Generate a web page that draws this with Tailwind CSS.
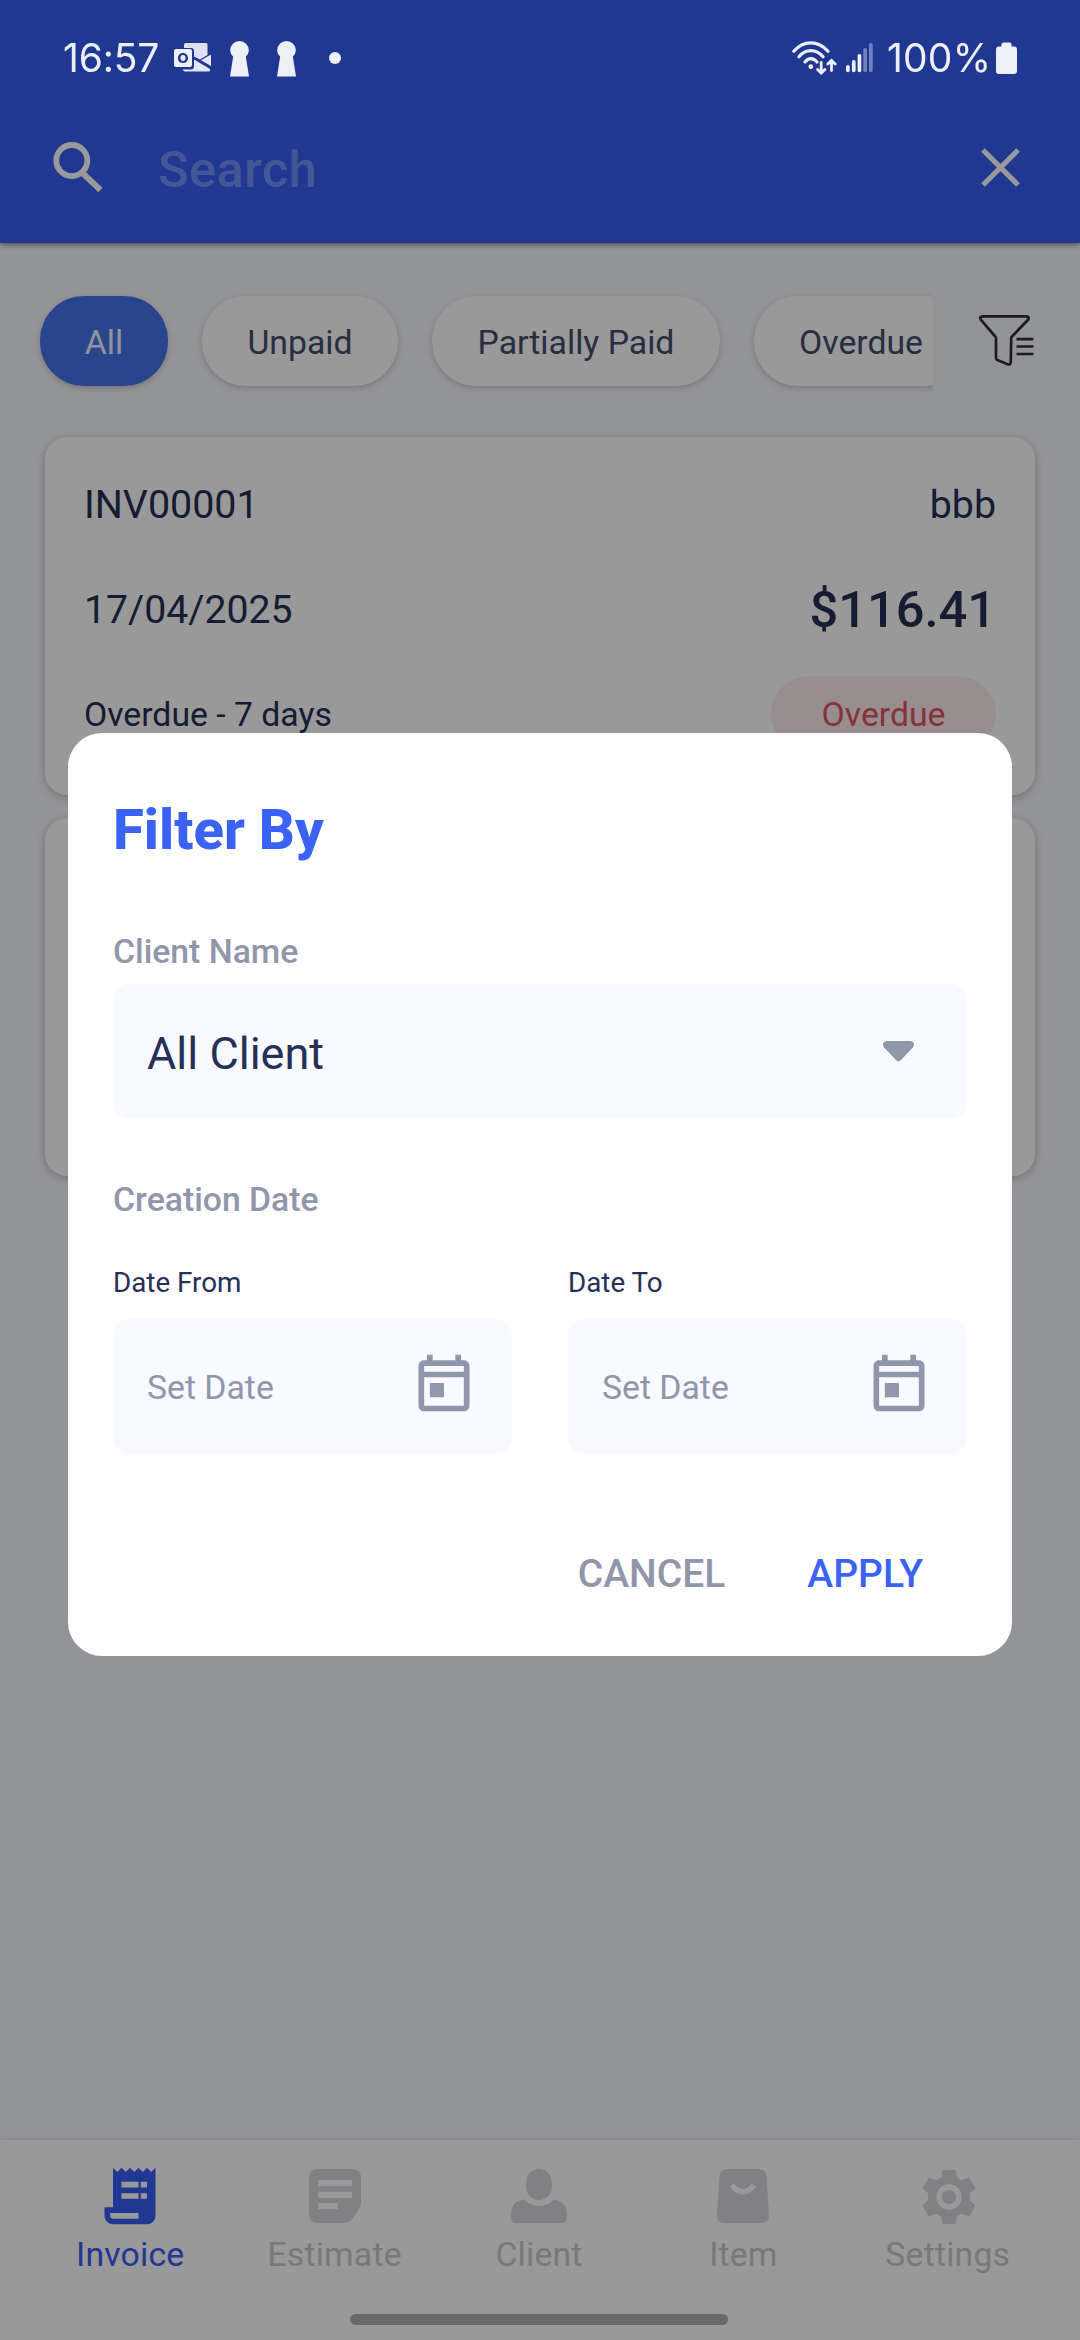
<!DOCTYPE html>
<html lang="en">
<head>
<meta charset="utf-8">
<title>Invoices</title>
<script src="https://cdn.jsdelivr.net/npm/@tailwindcss/browser@4"></script>
</head>
<body class="w-[1080px] h-[2340px] overflow-hidden bg-[#f6f7fd] font-['Roboto',sans-serif] text-[#243056]">
<div class="flex flex-col w-[1080px] h-[2340px]">

  <header class="relative h-[243px] shrink-0 bg-[#385ef6] shadow-[0_2px_5px_rgba(0,0,0,0.45)]">
    <!-- status bar -->
    <div class="relative z-20 flex items-start h-[100px] pt-[41px] pl-[63px] pr-[63px] text-[#eef0f8]">
      <span class="w-[111px] h-[34px] text-[39px] leading-[34px] font-['Inter',sans-serif] tracking-[-0.200px] whitespace-nowrap">16:57</span>
      <svg class="mt-[2px] shrink-0" width="38" height="30" viewBox="0 0 38 30" fill="currentColor">
        <path d="M12 0h20q1.500 0 1.500 1.500V12l-7.500 4.500-6-3V8q0-3-3-3H10V2q0-2 2-2z" opacity=".92"/>
        <path fill-rule="evenodd" d="M2 6h14q2 0 2 2v14q0 2-2 2H2q-2 0-2-2V8q0-2 2-2zM9 10c-3.200 0-5 2.200-5 5.200S5.800 20 9 20s5-2 5-4.800S12.200 10 9 10z"/>
        <ellipse cx="9" cy="15" rx="2.500" ry="3"/>
        <path d="M37 11.500v11.500l-10-5.700zM20 16.500l16 9.500v1.500q0 1-1.500 1H11q-2 0-2-2h8q3 0 3-3z" opacity=".95"/>
      </svg>
      <svg class="ml-[18px] shrink-0" width="19" height="36" viewBox="0 0 19 36" fill="currentColor"><path d="M9.500 0a9.300 9.300 0 0 1 9.300 9.300c0 2.600-1.200 4.700-3 6.200L19 35.500H0l3.200-20C1.400 14 .2 11.900.2 9.300A9.300 9.300 0 0 1 9.500 0z"/></svg>
      <svg class="ml-[28px] shrink-0" width="19" height="36" viewBox="0 0 19 36" fill="currentColor"><path d="M9.500 0a9.300 9.300 0 0 1 9.300 9.300c0 2.600-1.200 4.700-3 6.200L19 35.500H0l3.200-20C1.400 14 .2 11.900.2 9.300A9.300 9.300 0 0 1 9.500 0z"/></svg>
      <span class="ml-[33px] mt-[11px] size-[12px] rounded-full bg-[#eef0f8]"></span>
      <svg class="ml-auto shrink-0" width="46" height="34" viewBox="0 0 46 34" fill="none" stroke="currentColor" stroke-width="3.200" stroke-linecap="round">
        <path d="M1.800 10.200Q9 1.800 18.800 1.800T36 10.200M7 15.700Q12 9.700 18.800 9.700T31 15.700M13 21Q15.500 17.700 18.800 17.700T25 21"/>
        <circle cx="18.800" cy="25.700" r="2.400" fill="currentColor" stroke="none"/>
        <path stroke-width="2.800" d="M29.200 21.500v10M25.500 28.500l3.700 3.500 3.700-3.500M39.500 29.500v-9M35.800 23l3.700-3.500 3.700 3.500"/>
      </svg>
      <svg class="ml-[8px] mt-[2px] shrink-0" width="28" height="30" viewBox="0 0 28 30" fill="currentColor">
        <rect x="0" y="22" width="3.700" height="7.300" rx="1.800"/><rect x="5.900" y="17" width="3.700" height="12.300" rx="1.800"/><rect x="11.600" y="11" width="3.700" height="18.300" rx="1.800"/>
        <g opacity=".4"><rect x="17.300" y="5" width="3.700" height="24.300" rx="1.800"/><rect x="23" y="0" width="3.700" height="29.300" rx="1.800"/></g>
      </svg>
      <span class="ml-[13px] w-[103px] h-[34px] text-[39px] leading-[34px] font-['Inter',sans-serif] tracking-[0.200px] whitespace-nowrap">100%</span>
      <svg class="ml-[6px] mt-[1px] shrink-0" width="21" height="32" viewBox="0 0 21 32" fill="currentColor"><path d="M7.500 0.500h6q2 0 2 2v2h2.500q3 0 3 3V29q0 3-3 3H3q-3 0-3-3V7.500q0-3 3-3h2.500v-2q0-2 2-2z"/></svg>
    </div>
    <!-- search bar -->
    <div class="flex items-center h-[135px] pl-[53px] pr-[60px]">
      <svg width="51" height="51" viewBox="0 0 51 51" fill="none" stroke="#fff"><circle cx="18.800" cy="18.500" r="15.500" stroke-width="5.800"/><path d="M30.500 32l17 16" stroke-width="6"/></svg>
      <span class="ml-[54px] pt-[5px] text-[50.600px] leading-[60px] font-medium tracking-[0.400px] text-[#7490f9]">Search</span>
      <svg class="ml-auto" width="39" height="39" viewBox="0 0 39 39" fill="none" stroke="#fff" stroke-width="5.200"><path d="M2 2l35 35M37 2L2 37"/></svg>
    </div>
  </header>

  <main class="flex-1 flex flex-col">
    <!-- status filters -->
    <div class="flex items-center h-[174px] pt-[22px]">
      <div class="flex items-center gap-[34px] w-[933px] h-[130px] pl-[40px] overflow-hidden text-[33.750px] leading-[40px] text-[#434c6e] whitespace-nowrap">
        <span class="shrink-0 flex items-center justify-center w-[128px] h-[90px] pt-[3px] rounded-[44px] bg-[#4973ea] text-[#f3f5ff] shadow-[0_2px_6px_rgba(0,0,0,0.2)]">All</span>
        <span class="shrink-0 flex items-center justify-center w-[196px] h-[90px] pt-[3px] rounded-[44px] bg-white shadow-[0_2px_6px_rgba(0,0,0,0.2)]">Unpaid</span>
        <span class="shrink-0 flex items-center justify-center w-[288px] h-[90px] pt-[3px] rounded-[44px] bg-white shadow-[0_2px_6px_rgba(0,0,0,0.2)]">Partially Paid</span>
        <span class="shrink-0 flex items-center justify-center w-[214px] h-[90px] pt-[3px] rounded-[44px] bg-white shadow-[0_2px_6px_rgba(0,0,0,0.2)]">Overdue</span>
      </div>
      <svg class="ml-[46px]" width="56" height="52" viewBox="0 0 56 52" fill="none" stroke="#303030" stroke-width="2.700">
        <path d="M3.500 1.300H47Q51 1.500 49 4.800L33 21.500Q32.200 22.300 32.200 23.500L31.800 46.500Q31.500 50.300 28.500 49.300L18.500 45Q17 44.200 17 42.500V23.500Q17 22.300 16.200 21.500L1.900 4.800Q0 1.700 3.500 1.300z"/>
        <path d="M37.500 24.200h17M37.500 31.500h17M37.500 39h17"/>
      </svg>
    </div>

    <!-- invoice list -->
    <section class="flex flex-col gap-[23px] px-[45px] pt-[20px]">
      <article class="h-[358px] rounded-[22px] bg-white px-[39px] pt-[45px] shadow-[0_2px_8px_rgba(0,0,0,0.25)]">
        <div class="flex justify-between h-[46px] text-[39.400px] leading-[46px]"><span>INV00001</span><span>bbb</span></div>
        <div class="flex justify-between items-center mt-[52px] h-[60px]">
          <span class="text-[39.200px] leading-[46px]">17/04/2025</span>
          <span class="text-[50.600px] leading-[60px] font-medium">$116.41</span>
        </div>
        <div class="flex justify-between items-center mt-[36px] h-[76px] text-[33.750px] leading-[40px]">
          <span class="pt-[2px]">Overdue - 7 days</span>
          <span class="flex items-center justify-center w-[225px] h-[76px] pt-[2px] rounded-[38px] bg-[#feeced] text-[#e0555f]">Overdue</span>
        </div>
      </article>
      <article class="h-[358px] rounded-[22px] bg-white shadow-[0_2px_8px_rgba(0,0,0,0.25)]"></article>
    </section>
  </main>

  <nav class="flex flex-col h-[200px] shrink-0 bg-white pl-[28px] pr-[30px] pt-[22px] shadow-[0_-2px_6px_rgba(0,0,0,0.08)]">
    <div class="grid grid-cols-5 text-[33.750px] leading-[40px] tracking-[0.200px] text-[#c9c9c9] text-center">
      <a class="flex flex-col items-center text-[#385ef6]">
        <svg width="68" height="68" viewBox="0 0 24 24" fill="currentColor"><path fill-rule="evenodd" d="M19.500 3.500L18 2l-1.500 1.500L15 2l-1.500 1.500L12 2l-1.500 1.500L9 2 7.500 3.500 6 2v14H3v3c0 1.660 1.340 3 3 3h12c1.660 0 3-1.340 3-3V2l-1.500 1.500zM15 20H6c-.55 0-1-.45-1-1v-1h10v2zM9 7h6v2H9zM15.800 7h2.200v2h-2.200zM9 11h6v2H9zM15.800 11h2.200v2h-2.200z"/></svg>
        <span class="mt-[5px]">Invoice</span>
      </a>
      <a class="flex flex-col items-center">
        <svg width="68" height="68" viewBox="0 0 68 68" fill="#d5d6de"><path fill-rule="evenodd" d="M17 7H51q9 0 9 9V41q0 4.500-3 8l-6 8q-3.500 4-8 4H17q-9 0-9-9V16q0-9 9-9zM17 18v6.300H51V18zM17 29.700v6.300H51v-6.300zM17 41v6.300H37V41z"/></svg>
        <span class="mt-[5px]">Estimate</span>
      </a>
      <a class="flex flex-col items-center">
        <svg width="68" height="68" viewBox="0 0 68 68" fill="#d5d6de"><rect x="21.200" y="7" width="25.600" height="31" rx="12.800"/><path d="M19.500 37.700Q25.500 44 34 44T48.500 37.700Q61 39 61.800 51V56q0 5-5 5H11.200q-5 0-5-5V51Q7 38 19.500 37.700z"/></svg>
        <span class="mt-[5px]">Client</span>
      </a>
      <a class="flex flex-col items-center">
        <svg width="68" height="68" viewBox="0 0 68 68"><path fill="#d5d6de" d="M18.500 7h31q7.500 0 8 7.500L60 52q.5 9-8 9H16q-8.500 0-8-9L10.500 14.500Q11 7 18.500 7z"/><path d="M23 23Q28 29.700 34 29.700T45 23" fill="none" stroke="#fff" stroke-width="5.500"/></svg>
        <span class="mt-[5px]">Item</span>
      </a>
      <a class="flex flex-col items-center">
        <svg width="68" height="68" viewBox="-35 -35 68 68"><path fill="#d5d6de" stroke="#d5d6de" stroke-width="1.500" stroke-linejoin="round" d="M-6-26.300H6L7.200-18.800Q10-17.500 12-15.700L20-18.500 25.500-8.800 20-3.700Q20.500 0 20 3.700L25.500 8.800 20 18.500 12 15.700Q10 17.500 7.200 18.800L6 26.300H-6L-7.200 18.800Q-10 17.500-12 15.700L-20 18.500-25.500 8.800-20 3.700Q-20.500 0-20-3.700L-25.500-8.800-20-18.500-12-15.700Q-10-17.500-7.200-18.800z"/><circle r="9.900" fill="none" stroke="#fff" stroke-width="5.600"/></svg>
        <span class="mt-[5px]">Settings</span>
      </a>
    </div>
    <div class="mx-auto mt-[39px] w-[378px] h-[11px] rounded-full bg-[#afafaf]"></div>
  </nav>
</div>

<!-- filter dialog over a dimmed page -->
<div class="fixed inset-0 z-10 flex items-start justify-center bg-black/40 pt-[733px]">
  <div class="w-[944px] h-[923px] rounded-[34px] bg-white px-[45px] pt-[64px]">
    <h2 class="h-[66px] text-[56.250px] leading-[66px] font-extrabold text-[#3a63f6]">Filter By</h2>
    <div class="mt-[69px] h-[40px] text-[33.750px] leading-[40px] font-medium text-[#9096ab]">Client Name</div>
    <div class="mt-[12px] flex items-center justify-between h-[135px] rounded-[17px] bg-[#f9faff] pl-[34px] pr-[53px]">
      <span class="pt-[4px] text-[45px] leading-[54px]">All Client</span>
      <svg width="31" height="21" viewBox="0 0 31 21" fill="#9096ab"><path d="M3.500 0h24q5 1 2.800 6L18 19q-2.500 2.500-5 0L.700 6Q-1.500 1 3.500 0z"/></svg>
    </div>
    <div class="mt-[61px] h-[40px] text-[33.750px] leading-[40px] font-medium text-[#9096ab]">Creation Date</div>
    <div class="mt-[46px] grid grid-cols-2 gap-[56px]">
      <div>
        <div class="h-[33px] text-[27.800px] leading-[33px]">Date From</div>
        <div class="mt-[20px] flex items-center justify-between h-[135px] rounded-[17px] bg-[#f9faff] pl-[34px] pr-[34px]">
          <span class="pt-[2px] text-[33.750px] leading-[40px] text-[#9096ab]">Set Date</span>
          <svg class="mb-[8px]" width="68" height="68" viewBox="0 0 24 24" fill="#9096ab"><path fill-rule="evenodd" d="M19 4h-1V2h-2v2H8V2H6v2H5c-1.100 0-2 .9-2 2v14c0 1.100.9 2 2 2h14c1.100 0 2-.9 2-2V6c0-1.100-.9-2-2-2zm0 16H5V10h14v10zm0-12H5V6h14v2zM7 12h5v5H7z"/></svg>
        </div>
      </div>
      <div>
        <div class="h-[33px] text-[27.800px] leading-[33px]">Date To</div>
        <div class="mt-[20px] flex items-center justify-between h-[135px] rounded-[17px] bg-[#f9faff] pl-[34px] pr-[34px]">
          <span class="pt-[2px] text-[33.750px] leading-[40px] text-[#9096ab]">Set Date</span>
          <svg class="mb-[8px]" width="68" height="68" viewBox="0 0 24 24" fill="#9096ab"><path fill-rule="evenodd" d="M19 4h-1V2h-2v2H8V2H6v2H5c-1.100 0-2 .9-2 2v14c0 1.100.9 2 2 2h14c1.100 0 2-.9 2-2V6c0-1.100-.9-2-2-2zm0 16H5V10h14v10zm0-12H5V6h14v2zM7 12h5v5H7z"/></svg>
        </div>
      </div>
    </div>
    <div class="mt-[97px] flex justify-end h-[46px] pr-[44px] text-[39px] leading-[46px] font-medium">
      <span class="text-[#9096ab]">CANCEL</span>
      <span class="ml-[82px] text-[#3a63f6]">APPLY</span>
    </div>
  </div>
</div>
</body>
</html>
